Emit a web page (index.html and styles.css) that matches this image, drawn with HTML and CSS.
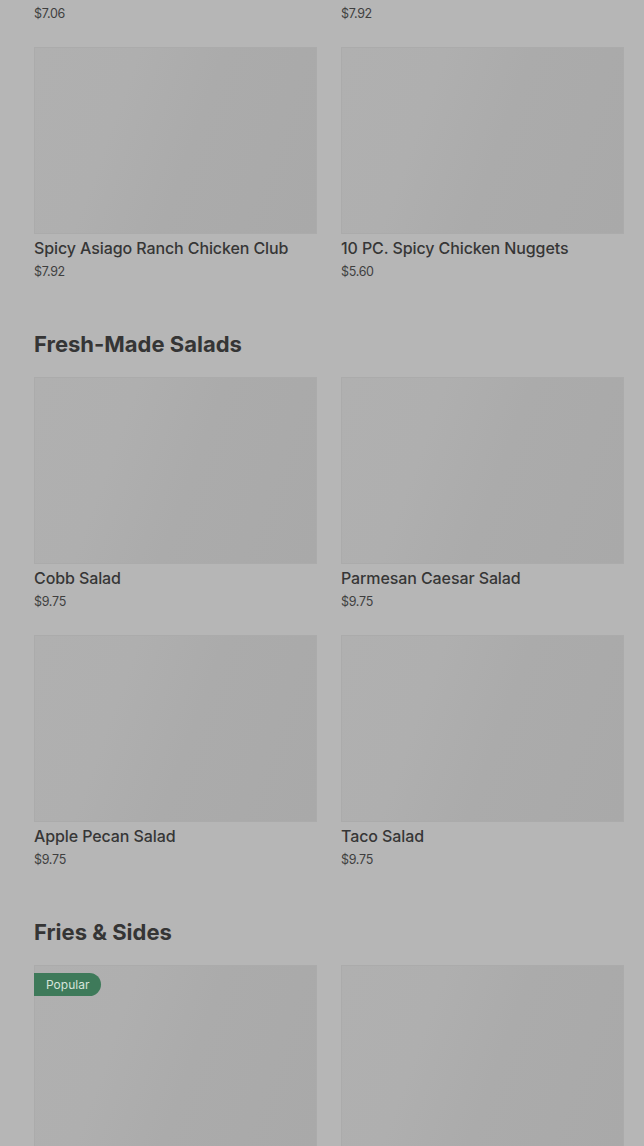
FILE: index.html
```html
<!DOCTYPE html>
<html lang="en">
<head>
<meta charset="utf-8">
<title>Menu</title>
<link rel="stylesheet" href="styles.css">
</head>
<body>
<main class="menu">
  <section class="section first">
    <div class="grid">
      <article class="item"><div class="thumb"></div><h3 class="name">Asiago Ranch Chicken Club</h3><p class="price">$7.06</p></article>
      <article class="item"><div class="thumb"></div><h3 class="name">Spicy Chicken Sandwich</h3><p class="price">$7.92</p></article>
      <article class="item"><div class="thumb"></div><h3 class="name">Spicy Asiago Ranch Chicken Club</h3><p class="price">$7.92</p></article>
      <article class="item"><div class="thumb"></div><h3 class="name">10 PC. Spicy Chicken Nuggets</h3><p class="price">$5.60</p></article>
    </div>
  </section>
  <section class="section">
    <h2 class="heading">Fresh-Made Salads</h2>
    <div class="grid">
      <article class="item"><div class="thumb"></div><h3 class="name">Cobb Salad</h3><p class="price">$9.75</p></article>
      <article class="item"><div class="thumb"></div><h3 class="name">Parmesan Caesar Salad</h3><p class="price">$9.75</p></article>
      <article class="item"><div class="thumb"></div><h3 class="name">Apple Pecan Salad</h3><p class="price">$9.75</p></article>
      <article class="item"><div class="thumb"></div><h3 class="name">Taco Salad</h3><p class="price">$9.75</p></article>
    </div>
  </section>
  <section class="section">
    <h2 class="heading">Fries &amp; Sides</h2>
    <div class="grid">
      <article class="item"><div class="thumb"><span class="badge">Popular</span></div><h3 class="name">Natural-Cut Fries</h3><p class="price">$3.09</p></article>
      <article class="item"><div class="thumb"></div><h3 class="name">Baked Potato</h3><p class="price">$3.09</p></article>
    </div>
  </section>
</main>
</body>
</html>
```
FILE: styles.css
```css
* { box-sizing: border-box; }
html, body {
  margin: 0;
  padding: 0;
  background: #b6b6b6;
  overflow: hidden;
}
body {
  font-family: Inter, "Liberation Sans", sans-serif;
  color: #363636;
}
.menu {
  margin-top: -211px;
  padding: 0 20px 0 34px;
}
.section {
  margin-top: 49px;
}
.section.first { margin-top: 0; }
.heading {
  margin: 0 0 19px;
  font-size: 22px;
  line-height: 28px;
  font-weight: 700;
  letter-spacing: 0;
  color: #353535;
}
.grid {
  display: grid;
  grid-template-columns: 283px 283px;
  column-gap: 24px;
  row-gap: 24px;
}
.item { margin: 0; }
.thumb {
  position: relative;
  height: 187px;
  border: 1px solid #ababab;
  background: linear-gradient(110deg, #b0b0b0 0%, #afafaf 30%, #ababab 55%, #a9a9a9 100%);
}
.name {
  margin: 2px 0 0;
  font-size: 16px;
  line-height: 24px;
  font-weight: 500;
  letter-spacing: -0.1px;
  color: #363636;
  white-space: nowrap;
}
.price {
  margin: 3px 0 0;
  font-size: 12.5px;
  line-height: 18px;
  font-weight: 400;
  letter-spacing: -0.3px;
  color: #3f3f3f;
}
.badge {
  position: absolute;
  left: -1px;
  top: 7px;
  height: 23px;
  padding: 0 12px 0 12px;
  background: #3e7a5a;
  color: #d6e4da;
  font-size: 12px;
  line-height: 23px;
  border-radius: 0 12px 12px 0;
}
```
